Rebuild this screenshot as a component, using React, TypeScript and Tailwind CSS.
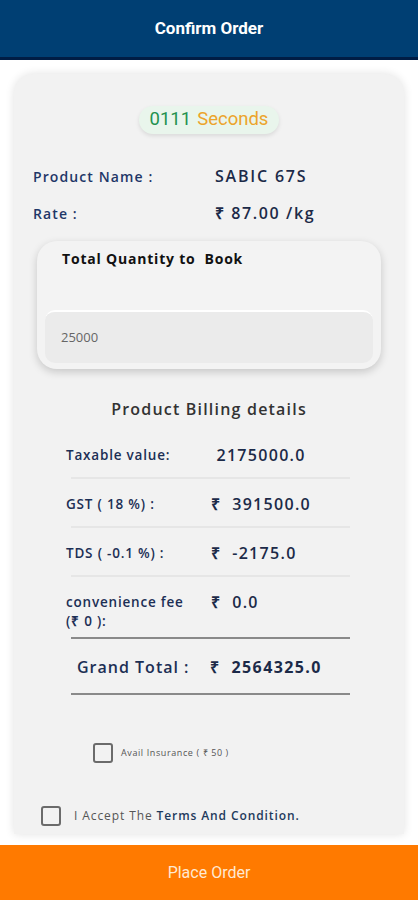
import React from "react";

const mont = "font-['Open_Sans',sans-serif]";

function BillRow({
  label,
  value,
  rupee = true,
  tall = false,
  divider = "border-[#e6e6e6]",
}: {
  label: React.ReactNode;
  value: string;
  rupee?: boolean;
  tall?: boolean;
  divider?: string;
}) {
  return (
    <div className="flex flex-col">
      <div className={`flex items-start pl-[52px] ${tall ? "h-[44px]" : "h-[31px]"}`}>
        <div className="w-[145px] text-[13.5px] font-semibold tracking-[0.8px] text-[#1c2f55] leading-[19px]">{label}</div>
        <div className="text-[16px] font-semibold tracking-[1.3px] text-[#1c2a48] leading-[19px] whitespace-pre">
          {rupee ? "₹  " : " "}
          {value}
        </div>
      </div>
      <div className={`ml-[57px] mr-[54px] border-t-2 ${divider}`} />
    </div>
  );
}

function Box({ className = "" }: { className?: string }) {
  return <div className={`border-2 border-[#6b6b6b] rounded-[3px] bg-transparent ${className}`} />;
}

export default function App() {
  return (
    <div className={`w-[418px] h-[900px] bg-white flex flex-col ${mont}`}>
      <div className="h-[60px] bg-[#003f73] border-b-[3px] border-[#001d45] flex items-center justify-center shrink-0">
        <span className="font-['Roboto',sans-serif] font-bold text-[17px] text-white">Confirm Order</span>
      </div>

      <div className="flex-1 px-[14px] pt-[14px] pb-[11px] overflow-hidden">
        <div className="h-full bg-[#f2f2f2] rounded-t-[20px] shadow-[0_0_10px_rgba(0,0,0,0.12)] flex flex-col">
          <div className="flex justify-center pt-[32px]">
            <div className="px-[11px] h-[28px] rounded-full bg-[#e9f5ec] shadow-[0_2px_4px_rgba(0,0,0,0.10)] flex items-center gap-[6px] font-['Roboto',sans-serif] text-[18.5px]">
              <span className="text-[#23914f]">0111</span>
              <span className="text-[#eca42b]">Seconds</span>
            </div>
          </div>

          <div className="flex flex-col gap-[13px] pt-[30px] pl-[19px]">
            <div className="flex items-center">
              <div className="w-[182px] text-[14px] font-semibold tracking-[1.1px] text-[#1f3768]">Product Name :</div>
              <div className="text-[16px] font-semibold tracking-[1.8px] text-[#1c2a48]">SABIC 67S</div>
            </div>
            <div className="flex items-center">
              <div className="w-[182px] text-[14px] font-semibold tracking-[1.1px] text-[#1f3768]">Rate :</div>
              <div className="text-[16px] font-semibold tracking-[1.6px] text-[#1c2a48]">₹ 87.00 /kg</div>
            </div>
          </div>

          <div className="mx-[23px] mt-[16px] h-[128px] rounded-[20px] bg-[#f3f3f3] shadow-[0_3px_8px_rgba(0,0,0,0.18)] flex flex-col px-[8px] pt-[7px]">
            <div className="pl-[17px] text-[14px] font-bold tracking-[0.8px] text-[#111]">Total Quantity to&nbsp; Book</div>
            <div className="mt-[41px] h-[53px] rounded-[10px] bg-[#ebebeb] border-t-2 border-white flex items-center pl-[16px] text-[13px] text-[#666]">
              25000
            </div>
          </div>

          <div className="mt-[28px] text-center text-[16px] font-semibold tracking-[1.2px] text-[#333]">Product Billing details</div>

          <div className="mt-[25px] flex flex-col gap-[16px]">
            <BillRow label="Taxable value:" value="2175000.0" rupee={false} />
            <BillRow label="GST ( 18 %)  :" value="391500.0" />
            <BillRow label="TDS ( -0.1 %)  :" value="-2175.0" />
            <BillRow
              tall
              label={
                <>
                  convenience fee
                  <br />
                  (₹ 0 ):
                </>
              }
              value="0.0"
              divider="border-[#8a8a8a]"
            />
          </div>
          <div className="flex flex-col mt-[17px]">
            <div className="flex items-center pl-[63px] h-[22px]">
              <div className="w-[133px] text-[16px] font-semibold tracking-[1px] text-[#1c2f55]">Grand Total :</div>
              <div className="text-[16px] font-bold tracking-[1.4px] text-[#1c2a48] whitespace-pre">₹  2564325.0</div>
            </div>
            <div className="ml-[57px] mr-[54px] mt-[15px] border-t-2 border-[#8a8a8a]" />
          </div>

          <div className="mt-[48px] flex items-center pl-[79px] gap-[8px]">
            <Box className="w-[20px] h-[20px]" />
            <span className="text-[9px] tracking-[0.6px] text-[#555]">Avail Insurance ( ₹ 50 )</span>
          </div>

          <div className="mt-[43px] flex items-center pl-[27px] gap-[13px]">
            <Box className="w-[20px] h-[20px]" />
            <span className="text-[12px] tracking-[0.9px] text-[#555]">
              I Accept The <span className="font-semibold text-[#1e3a5c]">Terms And Condition.</span>
            </span>
          </div>
        </div>
      </div>

      <div className="h-[55px] bg-[#ff7a00] flex items-center justify-center shrink-0">
        <span className="font-['Roboto',sans-serif] text-[16px] text-[#ffe9d2]">Place Order</span>
      </div>
    </div>
  );
}
